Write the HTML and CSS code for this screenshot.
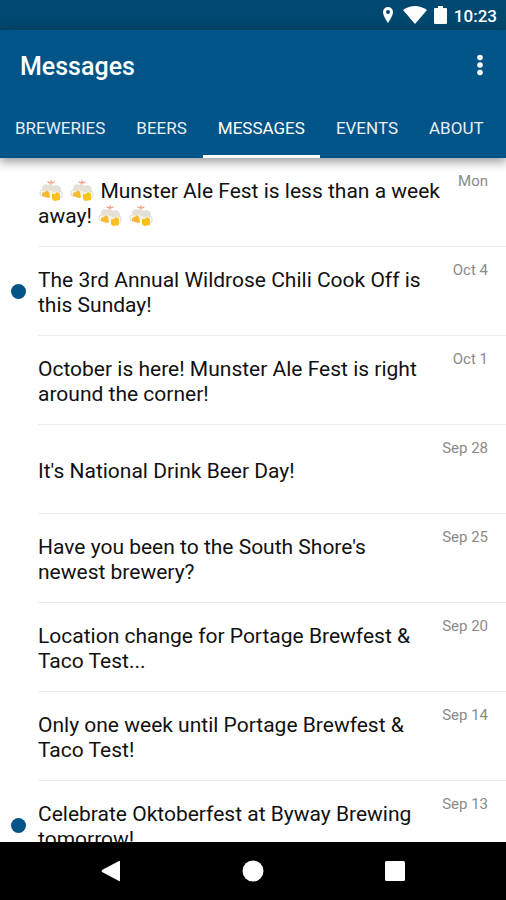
FILE: index.html
```html
<!DOCTYPE html>
<html lang="en">
<head>
<meta charset="utf-8">
<meta name="viewport" content="width=device-width, initial-scale=1">
<title>Messages</title>
<link rel="stylesheet" href="styles.css">
</head>
<body>
<svg class="defs" aria-hidden="true">
  <symbol id="beers" viewBox="0 0 26 22">
    <path d="M10 2l2 1M13 1v2M16 2l-2 1" stroke="#f5937c" stroke-width="1.3" stroke-linecap="round" fill="none"/>
    <path d="M5 10c-4 0-4 6 0 6M21 11c4 0 4 7 0 7" stroke="#e2e1de" stroke-width="1.3" fill="none"/>
    <path d="M5 8l8 1-1 9-8-2z" fill="#f2eee2"/>
    <path d="M13 9l9 1v9l-8 1z" fill="#f2eee2"/>
    <path d="M4 13l3-1 2-2 2 2 1 5-2 1-6-2z" fill="#f6b92f"/>
    <path d="M14 14l3 0 2-2 3 2 0 6-6 1-2-2z" fill="#f9c020"/>
    <path d="M4 8c0-3 4-5 6-3 2-2 5-1 5 1 4-2 8 0 8 4 0 3-3 2-4 1-2 2-4 1-5 0-2 0-3-1-4-2-2 2-6 2-6-1z" fill="#e4e0d6"/>
  </symbol>
</svg>
<div class="screen">
  <div class="status">
    <svg class="pin" viewBox="0 0 12 18"><path fill-rule="evenodd" d="M6 1a5 5 0 0 0-5 5c0 4 5 11 5 11s5-7 5-11a5 5 0 0 0-5-5zm0 3a2 2 0 1 1 0 4 2 2 0 0 1 0-4z"/></svg>
    <svg class="wifi" viewBox="0 0 24 18"><path d="M12 18L0 4Q12-4 24 4z"/></svg>
    <svg class="battery" viewBox="0 0 13 20"><path d="M4 1h5v2h3q1 0 1 1v14q0 1-1 1H1q-1 0-1-1V4q0-1 1-1h3z"/></svg>
    <time>10:23</time>
  </div>
  <header class="header">
    <div class="toolbar">
      <h1>Messages</h1>
      <button class="more" aria-label="More options"><svg viewBox="0 0 6 22"><circle cx="3" cy="3.5" r="2.8"/><circle cx="3" cy="11" r="2.8"/><circle cx="3" cy="18.5" r="2.8"/></svg></button>
    </div>
    <nav class="tabs">
      <a href="#">BREWERIES</a>
      <a href="#">BEERS</a>
      <a href="#" class="active" aria-current="page">MESSAGES</a>
      <a href="#">EVENTS</a>
      <a href="#">ABOUT</a>
    </nav>
  </header>
  <main class="list">
    <article class="row"><span class="mark"></span><div class="body"><p><svg class="emoji"><use href="#beers"/></svg> <svg class="emoji"><use href="#beers"/></svg> Munster Ale Fest is less than a week away! <svg class="emoji"><use href="#beers"/></svg> <svg class="emoji"><use href="#beers"/></svg></p><time>Mon</time></div></article>
    <article class="row"><span class="mark unread"></span><div class="body"><p>The 3rd Annual Wildrose Chili Cook Off is this Sunday!</p><time>Oct 4</time></div></article>
    <article class="row"><span class="mark"></span><div class="body"><p>October is here! Munster Ale Fest is right around the corner!</p><time>Oct 1</time></div></article>
    <article class="row"><span class="mark"></span><div class="body"><p>It's National Drink Beer Day!</p><time>Sep 28</time></div></article>
    <article class="row"><span class="mark"></span><div class="body"><p>Have you been to the South Shore's newest brewery?</p><time>Sep 25</time></div></article>
    <article class="row"><span class="mark"></span><div class="body"><p>Location change for Portage Brewfest &amp; Taco Test...</p><time>Sep 20</time></div></article>
    <article class="row"><span class="mark"></span><div class="body"><p>Only one week until Portage Brewfest &amp; Taco Test!</p><time>Sep 14</time></div></article>
    <article class="row"><span class="mark unread"></span><div class="body"><p>Celebrate Oktoberfest at Byway Brewing tomorrow!</p><time>Sep 13</time></div></article>
  </main>
  <footer class="navbar">
    <button aria-label="Back"><svg viewBox="0 0 22 22"><path d="M20 1.5v19q0 1-1 .5L2 12q-1-1 0-2L19 1q1-.5 1 .5z"/></svg></button>
    <button aria-label="Home"><svg viewBox="0 0 22 22"><circle cx="11" cy="11" r="10.5"/></svg></button>
    <button aria-label="Recent apps"><svg viewBox="0 0 22 22"><rect x="1" y="1" width="20" height="20" rx="1.5"/></svg></button>
  </footer>
</div>
</body>
</html>
```
FILE: styles.css
```css
* { box-sizing: border-box; }
body { margin: 0; font-family: Roboto, "Liberation Sans", sans-serif; background: #fff; color: #111; }
button { border: 0; padding: 0; background: none; }
svg { display: block; fill: #fff; }
.defs { display: none; }
.screen { height: 100vh; display: flex; flex-direction: column; overflow: hidden; }
.status { flex: none; height: 30px; padding: 0 9px; background: #00486f; color: #fff; display: flex; align-items: center; justify-content: flex-end; }
.status time { font-size: 17px; font-weight: 500; line-height: 30px; margin-left: 7px; padding-top: 2px; }
.pin { width: 12px; height: 18px; }
.wifi { width: 24px; height: 18px; margin-left: 9px; }
.battery { width: 13px; height: 20px; margin-left: 7px; }
.header { flex: none; background: #005487; color: #fff; position: relative; box-shadow: 0 3px 10px 1px rgba(0, 0, 0, .4); }
.toolbar { height: 70px; padding: 0 16px 0 20px; display: flex; align-items: center; justify-content: space-between; }
h1 { margin: 0; padding-top: 3px; font-size: 25px; font-weight: 500; line-height: 30px; }
.more { width: 20px; height: 32px; display: flex; align-items: center; justify-content: center; }
.more svg { width: 6px; height: 22px; }
.tabs { display: flex; gap: 1px; height: 58px; }
.tabs a { padding: 0 15px; font-size: 17px; line-height: 56px; color: #e8eff5; text-decoration: none; border-bottom: 3px solid transparent; white-space: nowrap; }
.tabs .active { color: #fff; border-bottom-color: #fff; }
.list { flex: 1; min-height: 0; overflow: hidden; }
.row { display: flex; height: 89px; }
.mark { flex: none; width: 38px; display: flex; align-items: center; padding-left: 11px; }
.unread::before { content: ""; width: 15px; height: 15px; border-radius: 50%; background: #005487; }
.body { flex: 1; min-width: 0; display: flex; align-items: center; gap: 14px; padding-right: 18px; border-bottom: 1px solid #ececec; }
.body p { flex: 1; margin: 0; padding-top: 4px; font-size: 21px; line-height: 25px; }
.body time { align-self: flex-start; padding-top: 14px; font-size: 15px; line-height: 18px; color: #8a8a8a; white-space: nowrap; }
.emoji { display: inline-block; width: 26px; height: 22px; vertical-align: -4px; }
.navbar { flex: none; height: 58px; padding: 0 40px; background: #000; display: flex; align-items: center; }
.navbar button { flex: 1; display: flex; justify-content: center; }
.navbar svg { width: 22px; height: 22px; }
```
